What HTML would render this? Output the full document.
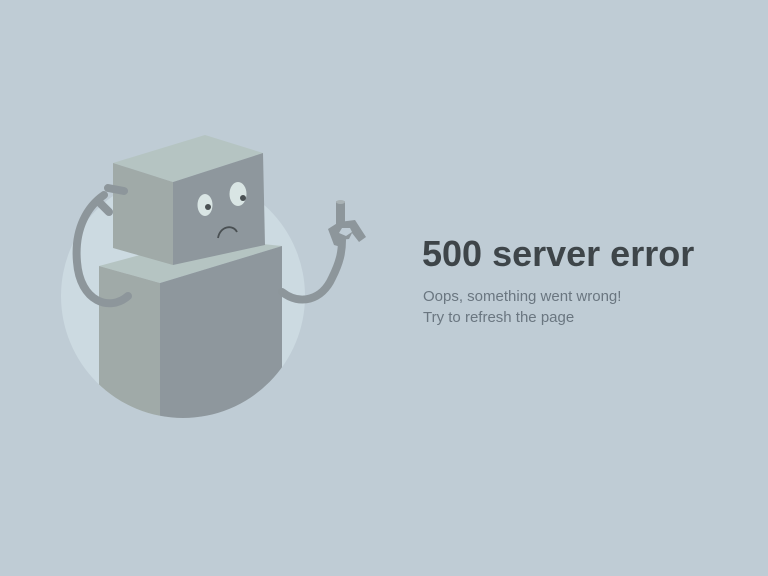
<!DOCTYPE html>
<html><head><style>
html,body{margin:0;padding:0;width:768px;height:576px;background:#bfccd5;overflow:hidden;font-family:"Liberation Sans",sans-serif}
h1{position:absolute;left:422px;top:233px;margin:0;font-size:36px;font-weight:bold;color:#3e4549}
p{position:absolute;left:423px;top:286px;margin:0;font-size:15px;line-height:21px;color:#6a7680}
</style></head><body>
<svg width="768" height="576" style="position:absolute;left:0;top:0">
<defs><clipPath id="c"><circle cx="183" cy="296" r="122"/><rect x="0" y="0" width="768" height="280"/></clipPath></defs>
<circle cx="183" cy="296" r="122" fill="#ccdae1"/>
<g clip-path="url(#c)">
<polygon points="99,266 203,238 282,246 160,283" fill="#b5c4c2"/>
<polygon points="99,266 160,283 160,430 99,430" fill="#a0aaa8"/>
<polygon points="160,283 282,246 282,430 160,430" fill="#8e979d"/>
</g>
<polygon points="113,163 205,135 263,153 173,182" fill="#b5c4c2"/>
<polygon points="113,163 173,182 173,265 113,248" fill="#a0aaa8"/>
<polygon points="173,182 263,153 265,245 173,265" fill="#8e979d"/>
<ellipse cx="205" cy="205" rx="7.5" ry="11" fill="#d9e5e4"/>
<ellipse cx="238" cy="194" rx="8.5" ry="12" fill="#d9e5e4"/>
<circle cx="208" cy="207" r="3" fill="#4a5053"/>
<circle cx="243" cy="198" r="3" fill="#4a5053"/>
<path d="M218 238 C220 226,233 224,237 232" stroke="#4a5053" stroke-width="1.8" fill="none"/>
<path d="M128 296 C110 312,80 302,77 262 C74 228,88 206,104 195" stroke="#8d969b" stroke-width="8" fill="none" stroke-linecap="round"/>
<path d="M108 188 L124 191 M100 203 L109 212" stroke="#8d969b" stroke-width="8" stroke-linecap="round"/>
<path d="M282 292 C300 306,322 300,332 278 C340 262,342 252,342 240" stroke="#8d969b" stroke-width="8" fill="none" stroke-linecap="round"/>
<rect x="336" y="201" width="9" height="24" rx="1" fill="#8d969b"/>
<ellipse cx="340.5" cy="202" rx="4.5" ry="2" fill="#a9b2b5"/>
<path fill-rule="evenodd" fill="#8d969b" d="M328 229 L339 222 L355 220 L366 237 L359 242 L352 233 L349 239 L340 240 L341 247 L334 245 Z M339 233 L342 228 L350 228 L352 232 L346 236 Z"/>
</svg>
<h1>500 server error</h1>
<p>Oops, something went wrong!<br>Try to refresh the page</p>
</body></html>
